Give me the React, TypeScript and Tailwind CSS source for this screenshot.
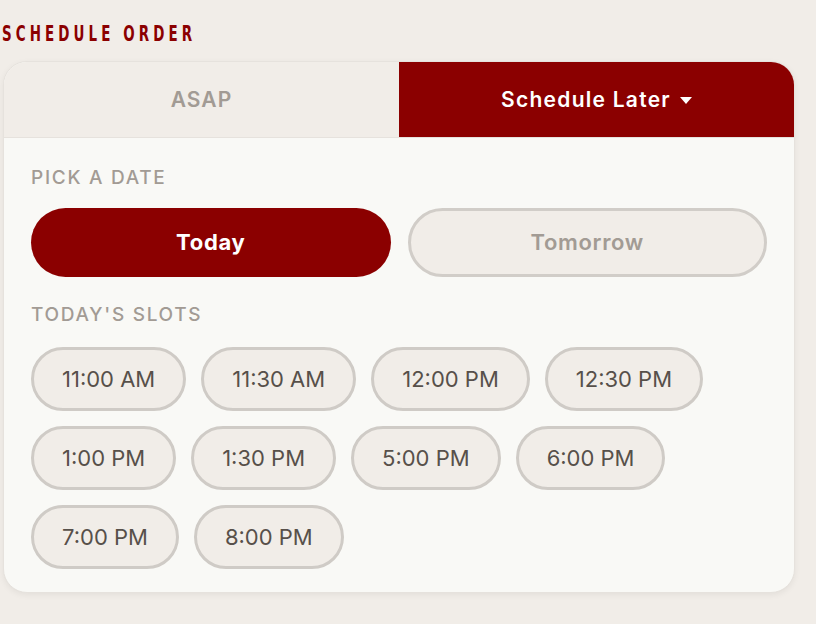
import { useState } from 'react';

const slots = [
  '11:00 AM',
  '11:30 AM',
  '12:00 PM',
  '12:30 PM',
  '1:00 PM',
  '1:30 PM',
  '5:00 PM',
  '6:00 PM',
  '7:00 PM',
  '8:00 PM',
];

export default function App() {
  const [mode, setMode] = useState<'asap' | 'later'>('later');
  const [day, setDay] = useState<'today' | 'tomorrow'>('today');

  return (
    <div className="min-h-screen w-full bg-[#f1ede8] pt-[22px] font-['Inter',sans-serif]">
      {/* Section title, narrow display caps */}
      <h2 className="flex h-[24px] items-center pl-[2px]">
        <span className="inline-block origin-left scale-x-[0.68] whitespace-nowrap font-['DejaVu_Sans_Condensed',sans-serif] text-[22px] font-bold leading-[24px] tracking-[6px] text-[#8b0000]">
          SCHEDULE ORDER
        </span>
      </h2>

      <div className="ml-[3px] mt-[15px] w-[792px] overflow-hidden rounded-[24px] border border-[#e6e2dd] bg-[#f9f9f6] shadow-[0_2px_6px_rgba(0,0,0,0.06)]">
        {/* Mode tabs */}
        <div className="flex h-[76px] border-b border-[#e6e2dd]">
          <button
            onClick={() => setMode('asap')}
            className={`flex flex-1 items-center justify-center text-[21px] font-semibold tracking-[0.05em] ${
              mode === 'asap' ? 'bg-[#8b0000] text-white' : 'bg-[#f1ede8] text-[#a29b94]'
            }`}
          >
            ASAP
          </button>
          <button
            onClick={() => setMode('later')}
            className={`flex flex-1 items-center justify-center gap-[9px] text-[21px] font-semibold tracking-[0.06em] ${
              mode === 'later' ? 'bg-[#8b0000] text-white' : 'bg-[#f1ede8] text-[#a29b94]'
            }`}
          >
            Schedule Later
            <svg width="12" height="7" viewBox="0 0 12 7" className="mt-[2px]">
              <path d="M0 0h12L6 7z" fill="currentColor" />
            </svg>
          </button>
        </div>

        <div className="px-[27px] pb-[23px] pt-[26px]">
          <div className="text-[19px] font-medium leading-[27px] tracking-[0.09em] text-[#a29b94]">PICK A DATE</div>

          <div className="mt-[17px] grid grid-cols-2 gap-[17px]">
            <button
              onClick={() => setDay('today')}
              className={`h-[69px] rounded-full text-[22px] font-bold tracking-[0.03em] ${
                day === 'today'
                  ? 'bg-[#8b0000] text-white'
                  : 'border-[3px] border-[#d1cdc8] bg-[#f1ede8] text-[#a29b94]'
              }`}
            >
              Today
            </button>
            <button
              onClick={() => setDay('tomorrow')}
              className={`h-[69px] rounded-full text-[22px] font-semibold tracking-[0.03em] ${
                day === 'tomorrow'
                  ? 'bg-[#8b0000] text-white'
                  : 'border-[3px] border-[#d1cdc8] bg-[#f1ede8] text-[#a29b94]'
              }`}
            >
              Tomorrow
            </button>
          </div>

          <div className="mt-[24px] text-[19px] font-medium leading-[27px] tracking-[0.09em] text-[#a29b94]">
            TODAY'S SLOTS
          </div>

          {/* Time slots */}
          <div className="mt-[19px] flex flex-wrap gap-x-[15px] gap-y-[15px]">
            {slots.map((s) => (
              <button
                key={s}
                className="h-[64px] rounded-full border-[3px] border-[#cfcbc6] bg-[#f1ede8] px-[28px] text-[22px] text-[#57504a]"
              >
                {s}
              </button>
            ))}
          </div>
        </div>
      </div>
    </div>
  );
}
